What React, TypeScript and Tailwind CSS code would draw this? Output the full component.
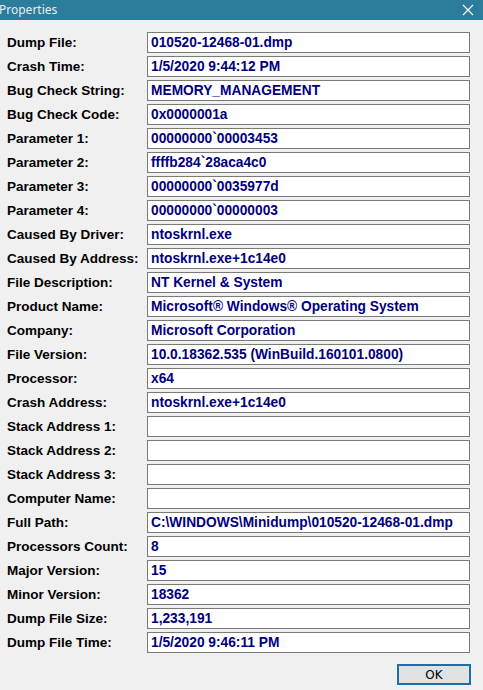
import { useState } from "react";

type Field = { label: string; value: string };

const fields: Field[] = [
  { label: "Dump File:", value: "010520-12468-01.dmp" },
  { label: "Crash Time:", value: "1/5/2020 9:44:12 PM" },
  { label: "Bug Check String:", value: "MEMORY_MANAGEMENT" },
  { label: "Bug Check Code:", value: "0x0000001a" },
  { label: "Parameter 1:", value: "00000000`00003453" },
  { label: "Parameter 2:", value: "ffffb284`28aca4c0" },
  { label: "Parameter 3:", value: "00000000`0035977d" },
  { label: "Parameter 4:", value: "00000000`00000003" },
  { label: "Caused By Driver:", value: "ntoskrnl.exe" },
  { label: "Caused By Address:", value: "ntoskrnl.exe+1c14e0" },
  { label: "File Description:", value: "NT Kernel & System" },
  { label: "Product Name:", value: "Microsoft® Windows® Operating System" },
  { label: "Company:", value: "Microsoft Corporation" },
  { label: "File Version:", value: "10.0.18362.535 (WinBuild.160101.0800)" },
  { label: "Processor:", value: "x64" },
  { label: "Crash Address:", value: "ntoskrnl.exe+1c14e0" },
  { label: "Stack Address 1:", value: "" },
  { label: "Stack Address 2:", value: "" },
  { label: "Stack Address 3:", value: "" },
  { label: "Computer Name:", value: "" },
  { label: "Full Path:", value: "C:\\WINDOWS\\Minidump\\010520-12468-01.dmp" },
  { label: "Processors Count:", value: "8" },
  { label: "Major Version:", value: "15" },
  { label: "Minor Version:", value: "18362" },
  { label: "Dump File Size:", value: "1,233,191" },
  { label: "Dump File Time:", value: "1/5/2020 9:46:11 PM" },
];

function FieldRow({ field }: { field: Field }) {
  return (
    <div className="grid grid-cols-[141px_1fr] items-center h-[21px]">
      <span className="text-[13.5px] font-bold text-black leading-none pl-[1px]">{field.label}</span>
      <div className="h-[21px] border border-[#7a7a7a] bg-white pl-[3px] flex items-center overflow-hidden">
        <span className="text-[13.75px] font-bold text-[#000080] leading-none whitespace-nowrap">
          {field.value}
        </span>
      </div>
    </div>
  );
}

export default function App() {
  const [open, setOpen] = useState(true);

  return (
    <div
      className="w-[483px] h-[690px] bg-[#f0f0f0] flex flex-col overflow-hidden"
      style={{ fontFamily: '"Liberation Sans", Arial, sans-serif' }}
    >
      <div className="h-[20px] bg-[#2c7c9b] flex items-center justify-between pr-[9px]">
        <span
          className="text-[12px] text-[#e6f1f5] -ml-[1px] leading-none"
          style={{ fontFamily: '"Noto Sans", "Open Sans", sans-serif' }}
        >
          Properties
        </span>
        <button onClick={() => setOpen(!open)} className="w-[12px] h-[12px] flex items-center justify-center">
          <svg width="12" height="12" viewBox="0 0 12 12">
            <path d="M1 1 L11 11 M11 1 L1 11" stroke="#ffffff" strokeWidth="1.1" fill="none" />
          </svg>
        </button>
      </div>

      <div className="flex flex-col gap-[3px] pt-[12px] pl-[6px] pr-[13px]">
        {fields.map((f) => (
          <FieldRow key={f.label} field={f} />
        ))}
      </div>

      <div className="flex justify-end pr-[12px] pt-[11px]">
        <button className="w-[74px] h-[21px] bg-[#e1e1e1] border-2 border-[#1c6ea4] text-[12px] text-black leading-none flex items-center justify-center"
          style={{ fontFamily: '"DejaVu Sans", sans-serif' }}>
          OK
        </button>
      </div>
    </div>
  );
}
